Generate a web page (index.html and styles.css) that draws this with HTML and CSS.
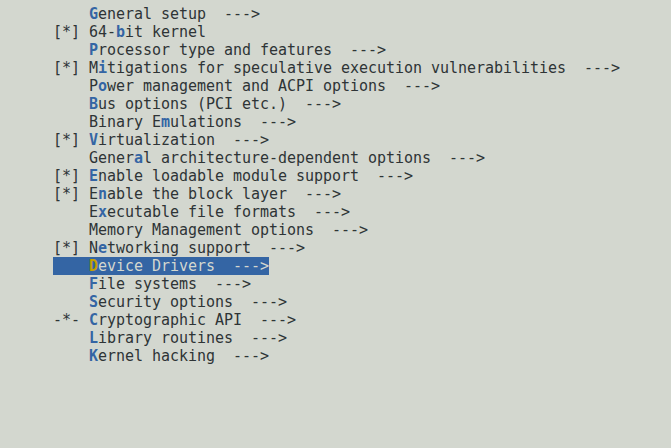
FILE: index.html
```html
<!DOCTYPE html>
<html lang="en">
<head>
    <meta charset="UTF-8">
    <title>Kernel Configuration</title>
    <link rel="stylesheet" href="styles.css">
</head>
<body>
    <div class="menu">
        <div class="row">    <span class="key">G</span>eneral setup  ---&gt;</div>
        <div class="row">[*] 64-<span class="key">b</span>it kernel</div>
        <div class="row">    <span class="key">P</span>rocessor type and features  ---&gt;</div>
        <div class="row">[*] M<span class="key">i</span>tigations for speculative execution vulnerabilities  ---&gt;</div>
        <div class="row">    P<span class="key">o</span>wer management and ACPI options  ---&gt;</div>
        <div class="row">    <span class="key">B</span>us options (PCI etc.)  ---&gt;</div>
        <div class="row">    Binary E<span class="key">m</span>ulations  ---&gt;</div>
        <div class="row">[*] <span class="key">V</span>irtualization  ---&gt;</div>
        <div class="row">    Gener<span class="key">a</span>l architecture-dependent options  ---&gt;</div>
        <div class="row">[*] <span class="key">E</span>nable loadable module support  ---&gt;</div>
        <div class="row">[*] E<span class="key">n</span>able the block layer  ---&gt;</div>
        <div class="row">    E<span class="key">x</span>ecutable file formats  ---&gt;</div>
        <div class="row">    Memory Management options  ---&gt;</div>
        <div class="row">[*] N<span class="key">e</span>tworking support  ---&gt;</div>
        <div class="row"><span class="selected">    <span class="key">D</span>evice Drivers  ---&gt;</span></div>
        <div class="row">    <span class="key">F</span>ile systems  ---&gt;</div>
        <div class="row">    <span class="key">S</span>ecurity options  ---&gt;</div>
        <div class="row">-*- <span class="key">C</span>ryptographic API  ---&gt;</div>
        <div class="row">    <span class="key">L</span>ibrary routines  ---&gt;</div>
        <div class="row">    <span class="key">K</span>ernel hacking  ---&gt;</div>
    </div>
</body>
</html>
```

FILE: styles.css
```css
* {
    margin: 0;
    padding: 0;
    box-sizing: border-box;
}

body {
    background: #d3d7cf;
    color: #2e3436;
    font-family: 'DejaVu Sans Mono', monospace;
    font-size: 15px;
    letter-spacing: -0.03px;
    height: 100vh;
    overflow: hidden;
}

/* menu list */
.menu {
    padding: 5px 0 0 53px;
}

.row {
    white-space: pre;
    height: 18px;
    line-height: 18px;
}

.key {
    color: #3465a4;
    font-weight: bold;
}

/* current item */
.selected {
    display: inline-block;
    background: #3465a4;
    color: #d3d7cf;
    height: 18px;
}

.selected .key {
    color: #c4a000;
}
```
